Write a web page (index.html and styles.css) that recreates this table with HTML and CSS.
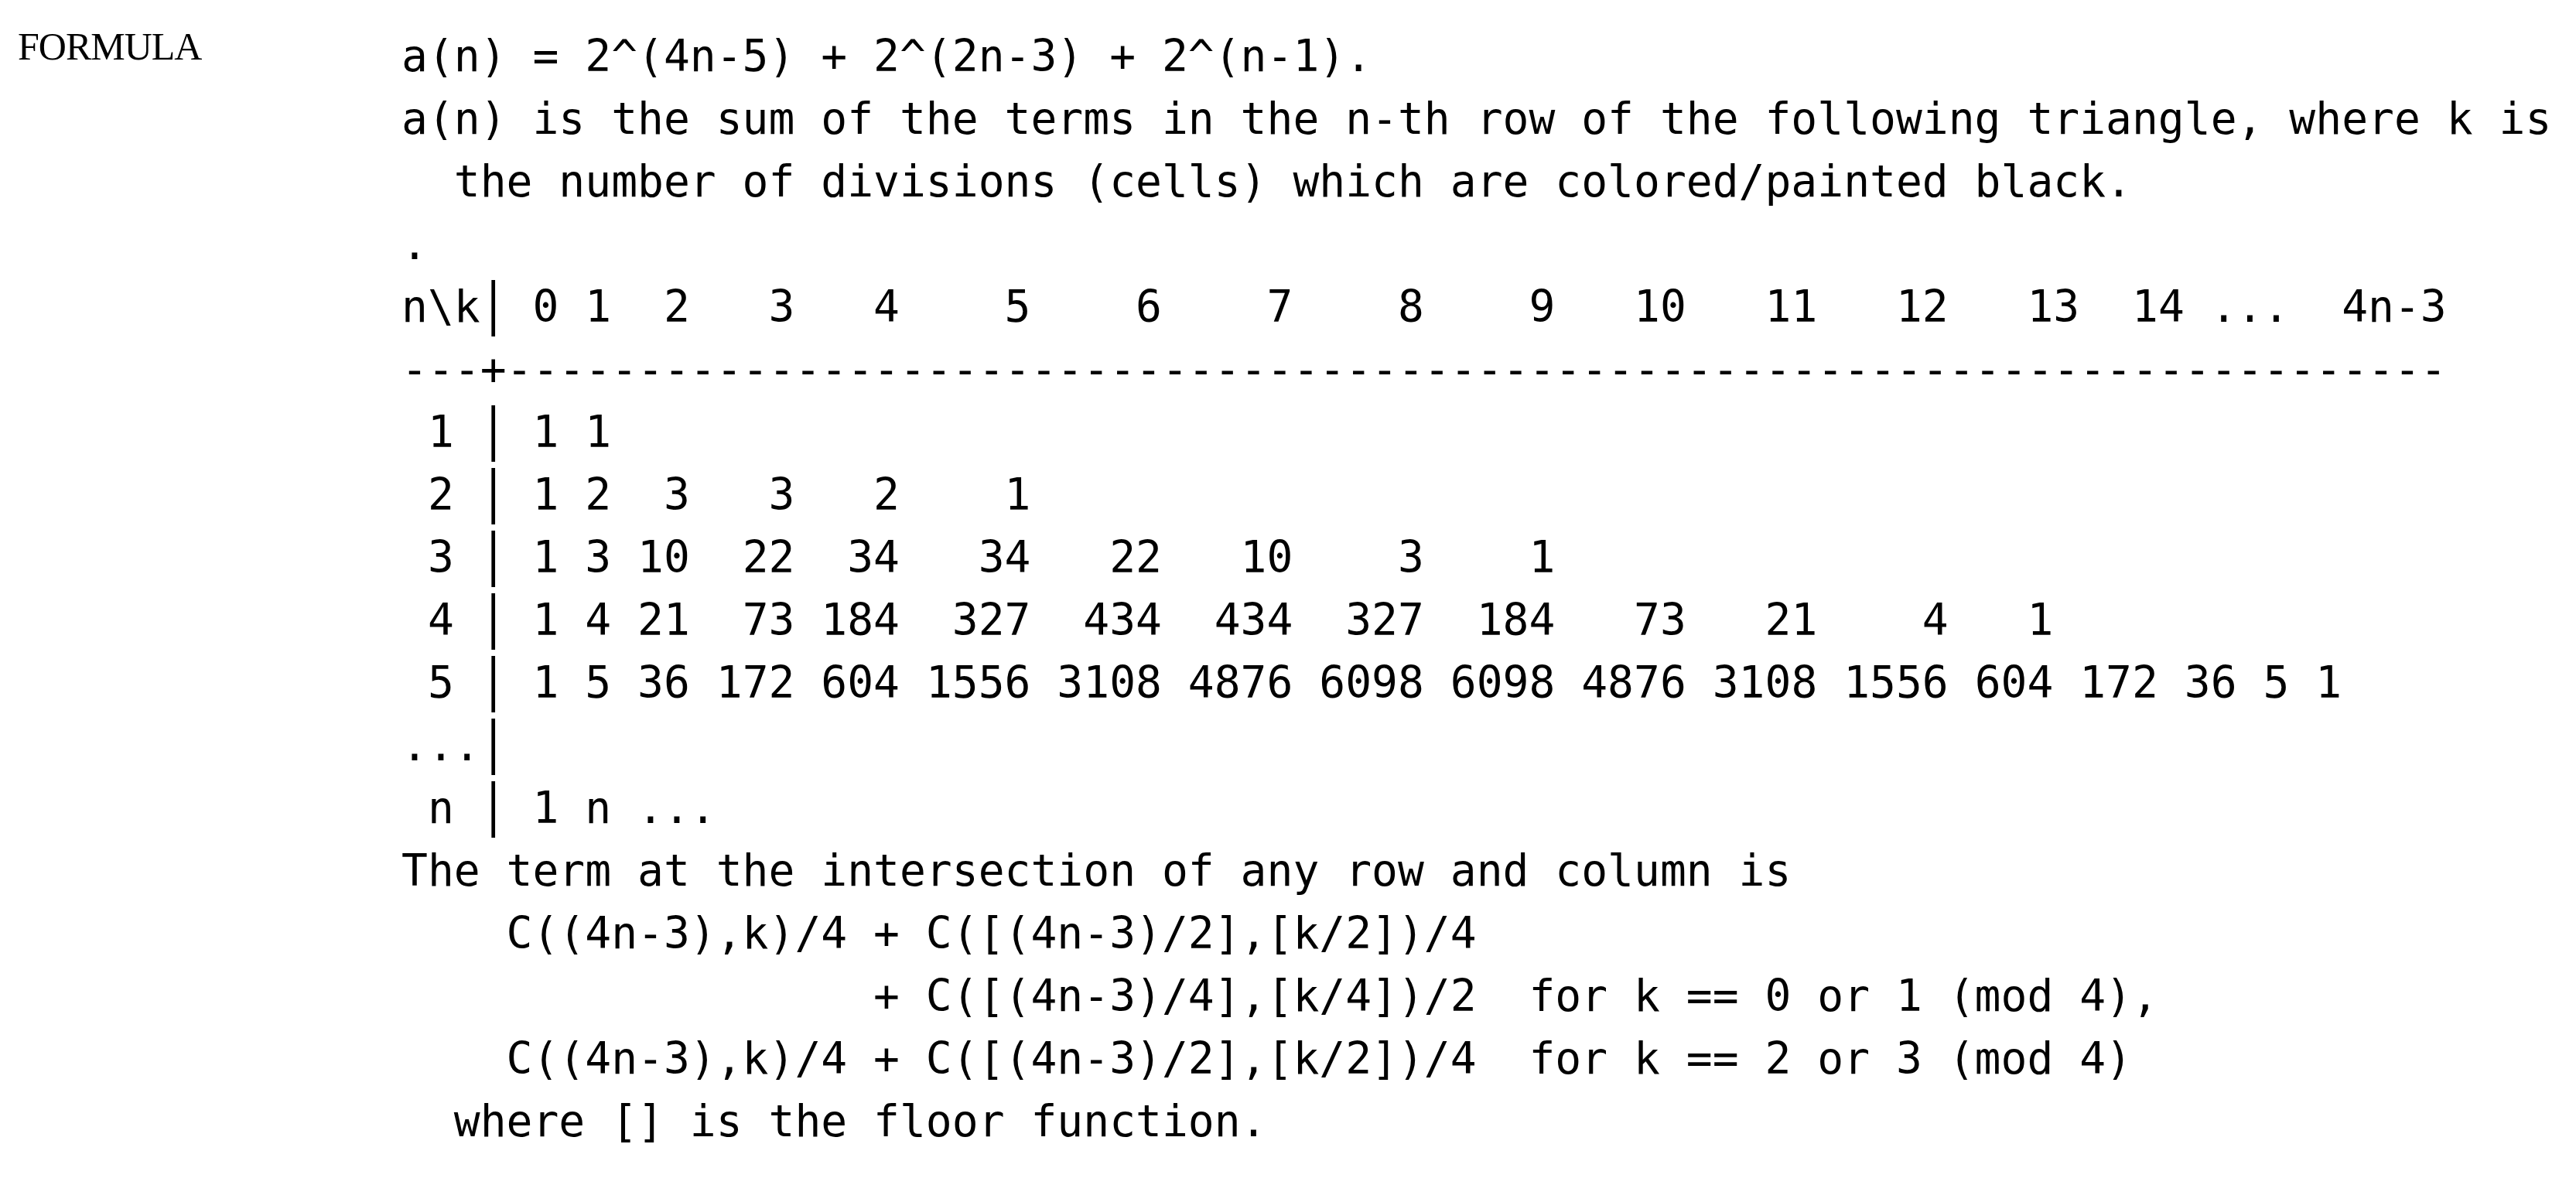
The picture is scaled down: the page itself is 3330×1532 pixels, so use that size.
FILE: index.html
```html
<!DOCTYPE html>
<html lang="en">
<head>
<meta charset="utf-8">
<title>FORMULA</title>
<link rel="stylesheet" href="styles.css">
</head>
<body>
<div class="entry">
  <div class="label">FORMULA</div>
<pre class="formula">a(n) = 2^(4n-5) + 2^(2n-3) + 2^(n-1).
a(n) is the sum of the terms in the n-th row of the following triangle, where k is
  the number of divisions (cells) which are colored/painted black.
.
n\k<span class="bar">|</span> 0 1  2   3   4    5    6    7    8    9   10   11   12   13  14 ...  4n-3
---+--------------------------------------------------------------------------
 1 <span class="bar">|</span> 1 1
 2 <span class="bar">|</span> 1 2  3   3   2    1
 3 <span class="bar">|</span> 1 3 10  22  34   34   22   10    3    1
 4 <span class="bar">|</span> 1 4 21  73 184  327  434  434  327  184   73   21    4   1
 5 <span class="bar">|</span> 1 5 36 172 604 1556 3108 4876 6098 6098 4876 3108 1556 604 172 36 5 1
...<span class="bar">|</span>
 n <span class="bar">|</span> 1 n ...
The term at the intersection of any row and column is
    C((4n-3),k)/4 + C([(4n-3)/2],[k/2])/4
                  + C([(4n-3)/4],[k/4])/2  for k == 0 or 1 (mod 4),
    C((4n-3),k)/4 + C([(4n-3)/2],[k/2])/4  for k == 2 or 3 (mod 4)
  where [] is the floor function.</pre>
</div>
</body>
</html>
```

FILE: styles.css
```css
html, body {
  margin: 0;
  padding: 0;
  background: #ffffff;
  color: #000000;
}

.entry {
  display: flex;
  align-items: flex-start;
  padding: 32px 0 0 23px;
}

.label {
  flex: 0 0 496px;
  margin-top: 3px;
  font-family: "Liberation Serif", "Times New Roman", serif;
  font-size: 50px;
  line-height: 50px;
  letter-spacing: -1px;
  color: #000000;
}

.formula {
  margin: 0;
  font-family: "DejaVu Sans Mono", "Liberation Mono", monospace;
  font-size: 56.3px;
  line-height: 81px;
  white-space: pre;
  color: #000000;
}

.bar {
  display: inline-block;
  transform: translateY(-4px) scaleY(1.3);
}
```
